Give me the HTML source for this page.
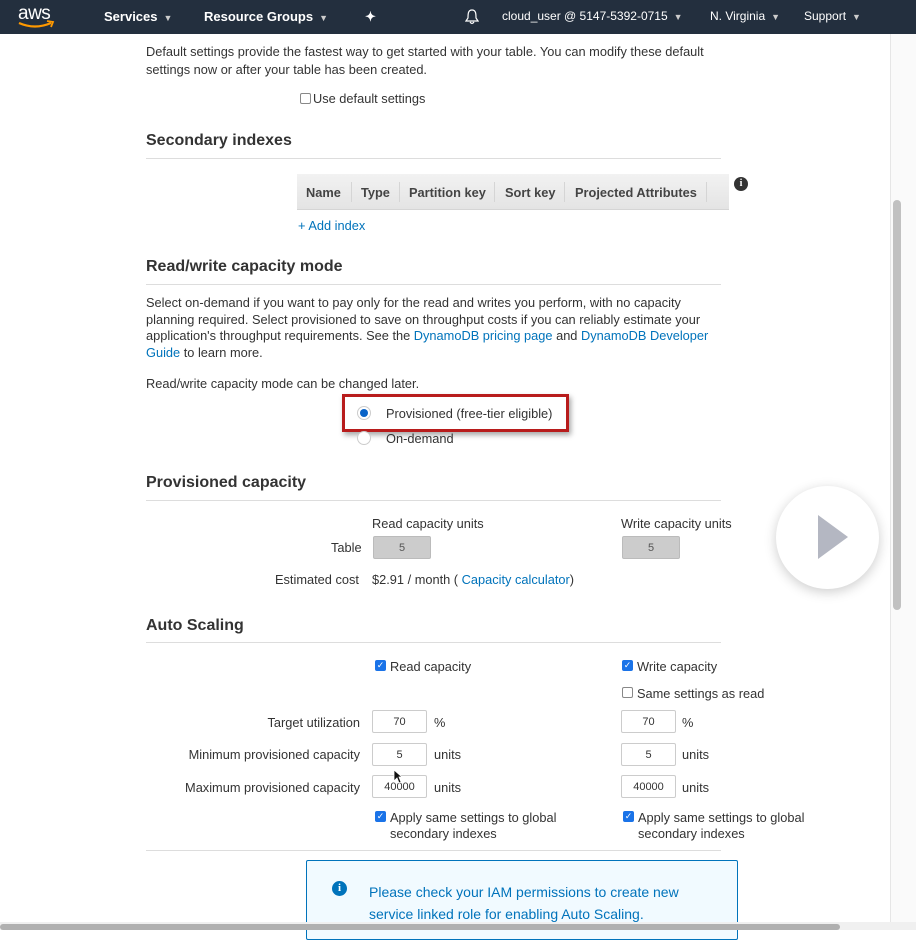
<!DOCTYPE html>
<html><head><meta charset="utf-8">
<style>
*{box-sizing:border-box;margin:0;padding:0}
body{width:916px;height:930px;overflow:hidden;background:#fff;font-family:"Liberation Sans",Arial,sans-serif;color:#333;font-size:12.8px;position:relative}
.a{position:absolute;white-space:nowrap}
.nav{position:absolute;left:0;top:0;width:916px;height:34px;background:#232f3e;color:#fff;font-size:13px}
.nav .a{top:9px}
.b{font-weight:bold}
.car{font-size:9px;margin-left:6px;color:#ccc}
h2{position:absolute;font-size:16px;font-weight:bold;color:#333;white-space:nowrap}
.hr{position:absolute;left:146px;width:575px;height:1px;background:#ddd}
.lnk{color:#0073bb}
.box{position:absolute;width:55px;height:23px;border:1px solid #ccc;border-radius:2px;text-align:center;font-size:11px;line-height:23px;background:#fff}
.gb{background:#ccc;border-color:#bbb;color:#555}
.cb{position:absolute;width:11px;height:11px;border-radius:2px;background:#1a73e8;color:#fff;font-size:9px;line-height:11px;text-align:center}
.cbe{position:absolute;width:11px;height:11px;border-radius:2px;border:1px solid #888;background:#fff}
.r{text-align:right}
</style></head><body>
<div class="nav">
 <div class="a" style="left:18px;top:3px;font-size:19px;letter-spacing:-0.5px">aws</div>
 <svg class="a" style="left:17px;top:20px" width="40" height="10"><path d="M2 3 Q18 10 34 3" stroke="#f90" stroke-width="2.2" fill="none"/><path d="M30 1 L36 2 L34 7" stroke="#f90" stroke-width="1.8" fill="none"/></svg>
 <div class="a b" style="left:104px">Services<span class="car">▼</span></div>
 <div class="a b" style="left:204px">Resource Groups<span class="car">▼</span></div>
 <div class="a b" style="left:365px;font-size:13px">✦</div>
 <svg class="a" style="left:465px;top:9px" width="14" height="16"><path d="M7 1 C3 1 3 5 3 9 L1 12 H13 L11 9 C11 5 11 1 7 1 Z M5 13 Q7 16 9 13" stroke="#fff" stroke-width="1.2" fill="none"/></svg>
 <div class="a" style="left:502px;font-size:12px">cloud_user @ 5147-5392-0715<span class="car">▼</span></div>
 <div class="a" style="left:710px;font-size:12px">N. Virginia<span class="car">▼</span></div>
 <div class="a" style="left:804px;font-size:12px">Support<span class="car">▼</span></div>
</div>

<div class="a" style="left:146px;top:44px">Default settings provide the fastest way to get started with your table. You can modify these default</div>
<div class="a" style="left:146px;top:62px">settings now or after your table has been created.</div>
<div class="cbe" style="left:300px;top:93px"></div>
<div class="a" style="left:313px;top:91px">Use default settings</div>

<h2 style="left:146px;top:132px">Secondary indexes</h2>
<div class="hr" style="top:158px"></div>
<div class="a" style="left:297px;top:174px;width:432px;height:36px;background:linear-gradient(#f2f2f2,#e4e4e4);border-bottom:1px solid #d5d5d5"></div>
<div class="a b" style="left:306px;top:185px;color:#444">Name</div>
<div class="a b" style="left:361px;top:185px;color:#444">Type</div>
<div class="a b" style="left:409px;top:185px;color:#444">Partition key</div>
<div class="a b" style="left:505px;top:185px;color:#444">Sort key</div>
<div class="a b" style="left:575px;top:185px;color:#444">Projected Attributes</div>
<div class="a" style="left:351px;top:182px;width:1px;height:20px;background:#d5d5d5"></div>
<div class="a" style="left:399px;top:182px;width:1px;height:20px;background:#d5d5d5"></div>
<div class="a" style="left:494px;top:182px;width:1px;height:20px;background:#d5d5d5"></div>
<div class="a" style="left:564px;top:182px;width:1px;height:20px;background:#d5d5d5"></div>
<div class="a" style="left:706px;top:182px;width:1px;height:20px;background:#d5d5d5"></div>
<div class="a" style="left:734px;top:177px;width:14px;height:14px;border-radius:50%;background:#333;color:#fff;font-size:10px;font-weight:bold;text-align:center;line-height:14px;font-family:'Liberation Serif',serif">i</div>
<div class="a lnk" style="left:298px;top:218px">+ Add index</div>

<h2 style="left:146px;top:258px">Read/write capacity mode</h2>
<div class="hr" style="top:284px"></div>
<div class="a" style="left:146px;top:295px;line-height:16.5px">Select on-demand if you want to pay only for the read and writes you perform, with no capacity<br>planning required. Select provisioned to save on throughput costs if you can reliably estimate your<br>application's throughput requirements. See the <span class="lnk">DynamoDB pricing page</span> and <span class="lnk">DynamoDB Developer</span><br><span class="lnk">Guide</span> to learn more.</div>
<div class="a" style="left:146px;top:376px">Read/write capacity mode can be changed later.</div>
<div class="a" style="left:342px;top:394px;width:227px;height:38px;border:3px solid #b81c1c;box-shadow:2px 3px 5px rgba(0,0,0,.35)"></div>
<div class="a" style="left:357px;top:406px;width:14px;height:14px;border-radius:50%;border:1px solid #ccc;background:#fff"><div style="margin:2px;width:8px;height:8px;border-radius:50%;background:#0a64c8"></div></div>
<div class="a" style="left:386px;top:406px">Provisioned (free-tier eligible)</div>
<div class="a" style="left:357px;top:431px;width:14px;height:14px;border-radius:50%;border:1px solid #ccc;background:#fff"></div>
<div class="a" style="left:386px;top:431px">On-demand</div>

<h2 style="left:146px;top:474px">Provisioned capacity</h2>
<div class="hr" style="top:500px"></div>
<div class="a" style="left:372px;top:516px">Read capacity units</div>
<div class="a" style="left:621px;top:516px">Write capacity units</div>
<div class="a" style="left:331px;top:540px">Table</div>
<div class="box gb" style="left:373px;top:536px;width:58px">5</div>
<div class="box gb" style="left:622px;top:536px;width:58px">5</div>
<div class="a" style="left:275px;top:572px">Estimated cost</div>
<div class="a" style="left:372px;top:572px">$2.91 / month ( <span class="lnk">Capacity calculator</span>)</div>

<h2 style="left:146px;top:617px">Auto Scaling</h2>
<div class="hr" style="top:642px"></div>
<div class="cb" style="left:375px;top:660px">✓</div><div class="a" style="left:390px;top:659px">Read capacity</div>
<div class="cb" style="left:622px;top:660px">✓</div><div class="a" style="left:637px;top:659px">Write capacity</div>
<div class="cbe" style="left:622px;top:687px"></div><div class="a" style="left:637px;top:686px">Same settings as read</div>
<div class="a r" style="left:160px;width:200px;top:715px">Target utilization</div>
<div class="a r" style="left:160px;width:200px;top:747px">Minimum provisioned capacity</div>
<div class="a r" style="left:160px;width:200px;top:780px">Maximum provisioned capacity</div>
<div class="box" style="left:372px;top:710px">70</div><div class="a" style="left:434px;top:715px">%</div>
<div class="box" style="left:372px;top:743px">5</div><div class="a" style="left:434px;top:747px">units</div>
<div class="box" style="left:372px;top:775px">40000</div><div class="a" style="left:434px;top:780px">units</div>
<div class="box" style="left:621px;top:710px">70</div><div class="a" style="left:682px;top:715px">%</div>
<div class="box" style="left:621px;top:743px">5</div><div class="a" style="left:682px;top:747px">units</div>
<div class="box" style="left:621px;top:775px">40000</div><div class="a" style="left:682px;top:780px">units</div>
<svg class="a" style="left:393px;top:769px" width="10" height="16"><path d="M1 1 L1 12 L4 9 L6 14 L8 13 L6 8 L9 8 Z" fill="#111" stroke="#fff" stroke-width=".8"/></svg>
<div class="cb" style="left:375px;top:811px">✓</div><div class="a" style="left:390px;top:810px;line-height:16px">Apply same settings to global<br>secondary indexes</div>
<div class="cb" style="left:623px;top:811px">✓</div><div class="a" style="left:638px;top:810px;line-height:16px">Apply same settings to global<br>secondary indexes</div>
<div class="hr" style="top:850px"></div>

<div class="a" style="left:306px;top:860px;width:432px;height:80px;border:1px solid #0073bb;border-radius:2px;background:#f1faff"></div>
<div class="a" style="left:332px;top:881px;width:15px;height:15px;border-radius:50%;background:#0073bb;color:#fff;font-size:11px;font-weight:bold;text-align:center;line-height:15px;font-family:'Liberation Serif',serif">i</div>
<div class="a lnk" style="left:369px;top:881px;font-size:14px;line-height:22px">Please check your IAM permissions to create new<br>service linked role for enabling Auto Scaling.</div>

<div class="a" style="left:890px;top:34px;width:26px;height:896px;background:#fafafa;border-left:1px solid #e6e6e6"></div>
<div class="a" style="left:893px;top:200px;width:8px;height:410px;border-radius:4px;background:#c1c1c1"></div>
<div class="a" style="left:0;top:922px;width:916px;height:8px;background:#f0f0f0"></div>
<div class="a" style="left:0;top:924px;width:840px;height:6px;border-radius:3px;background:#b0b0b0"></div>

<div class="a" style="left:776px;top:486px;width:103px;height:103px;border-radius:50%;background:#fff;box-shadow:0 3px 12px rgba(0,0,0,.2)"></div>
<svg class="a" style="left:816px;top:513px" width="34" height="48"><path d="M2 2 L32 24 L2 46 Z" fill="#b4b7c2"/></svg>
</body></html>
